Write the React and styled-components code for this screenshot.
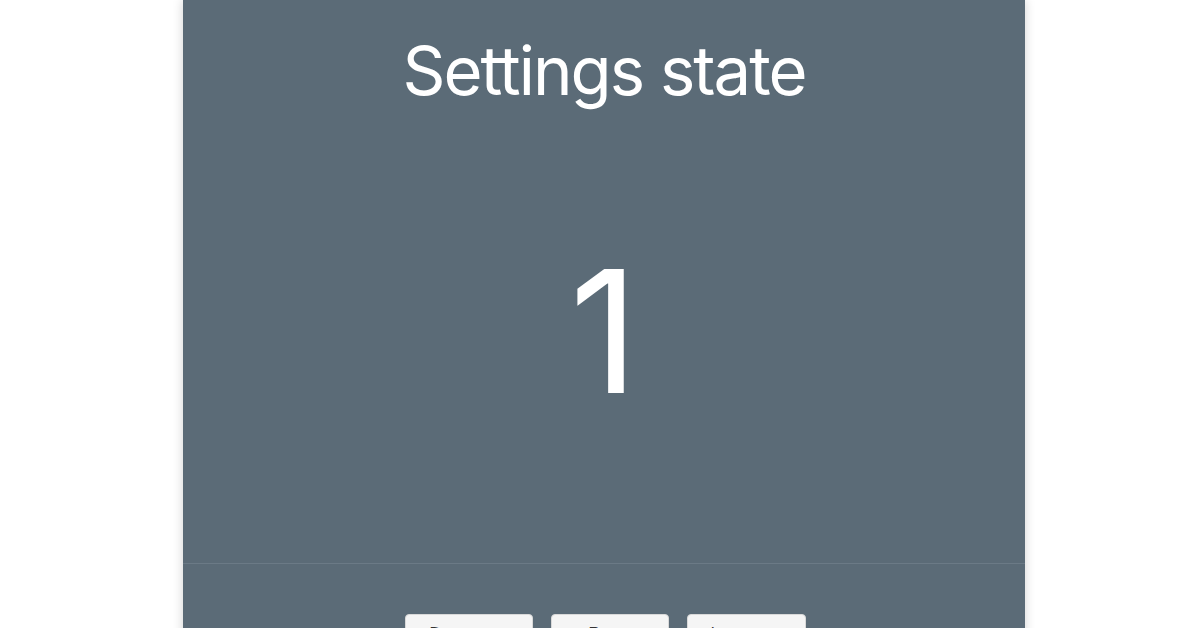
import React from 'react'
import styled, { createGlobalStyle } from 'styled-components';

const GlobalStyle = createGlobalStyle`
    html, body {
        margin: 0;
        padding: 0;
        background: #ffffff;
        overflow: hidden;
    }
    body {
        font-family: Inter, "Liberation Sans", Arial, sans-serif;
    }
`;

function App() {
    return (
        <Page>
            <GlobalStyle />
            <Panel>
                <Title>Settings state</Title>
                <Count>1</Count>
                <Footer>
                    <ButtonRow>
                        <Button w={128}>Decrement</Button>
                        <Button w={118}>Reset</Button>
                        <Button w={119}>Increment</Button>
                    </ButtonRow>
                </Footer>
            </Panel>
        </Page>
    )
}

const Page = styled.div`
    width: 100vw;
    height: 100vh;
    display: flex;
    padding-left: 183px;
    box-sizing: border-box;
`;

const Panel = styled.div`
    width: 842px;
    min-height: 700px;
    background-color: #5b6b77;
    box-shadow: 0 0 10px rgba(0, 0, 0, 0.18);
    display: flex;
    flex-direction: column;
    align-items: center;
    color: #ffffff;
`;

const Title = styled.h1`
    margin: 0;
    padding-top: 37px;
    font-size: 67px;
    line-height: 67px;
    font-weight: 400;
    letter-spacing: -2px;
`;

const Count = styled.div`
    margin-top: 142px;
    font-size: 170px;
    line-height: 170px;
    font-weight: 400;
`;

const Footer = styled.div`
    align-self: stretch;
    margin-top: 147px;
    border-top: 1px solid #6b7a86;
    padding-top: 50px;
    display: flex;
    justify-content: center;
`;

const ButtonRow = styled.div`
    display: flex;
    gap: 18px;
    margin-left: 2px;
`;

const Button = styled.button`
    width: ${props => props.w}px;
    height: 40px;
    background: #f5f5f5;
    border: 1px solid #d9d9d9;
    border-radius: 4px;
    color: #333333;
    font-family: "Liberation Sans", Arial, sans-serif;
    font-size: 16px;
    padding: 10px 0 0;
    display: flex;
    justify-content: center;
    align-items: flex-start;
    cursor: pointer;
`;

export default App
